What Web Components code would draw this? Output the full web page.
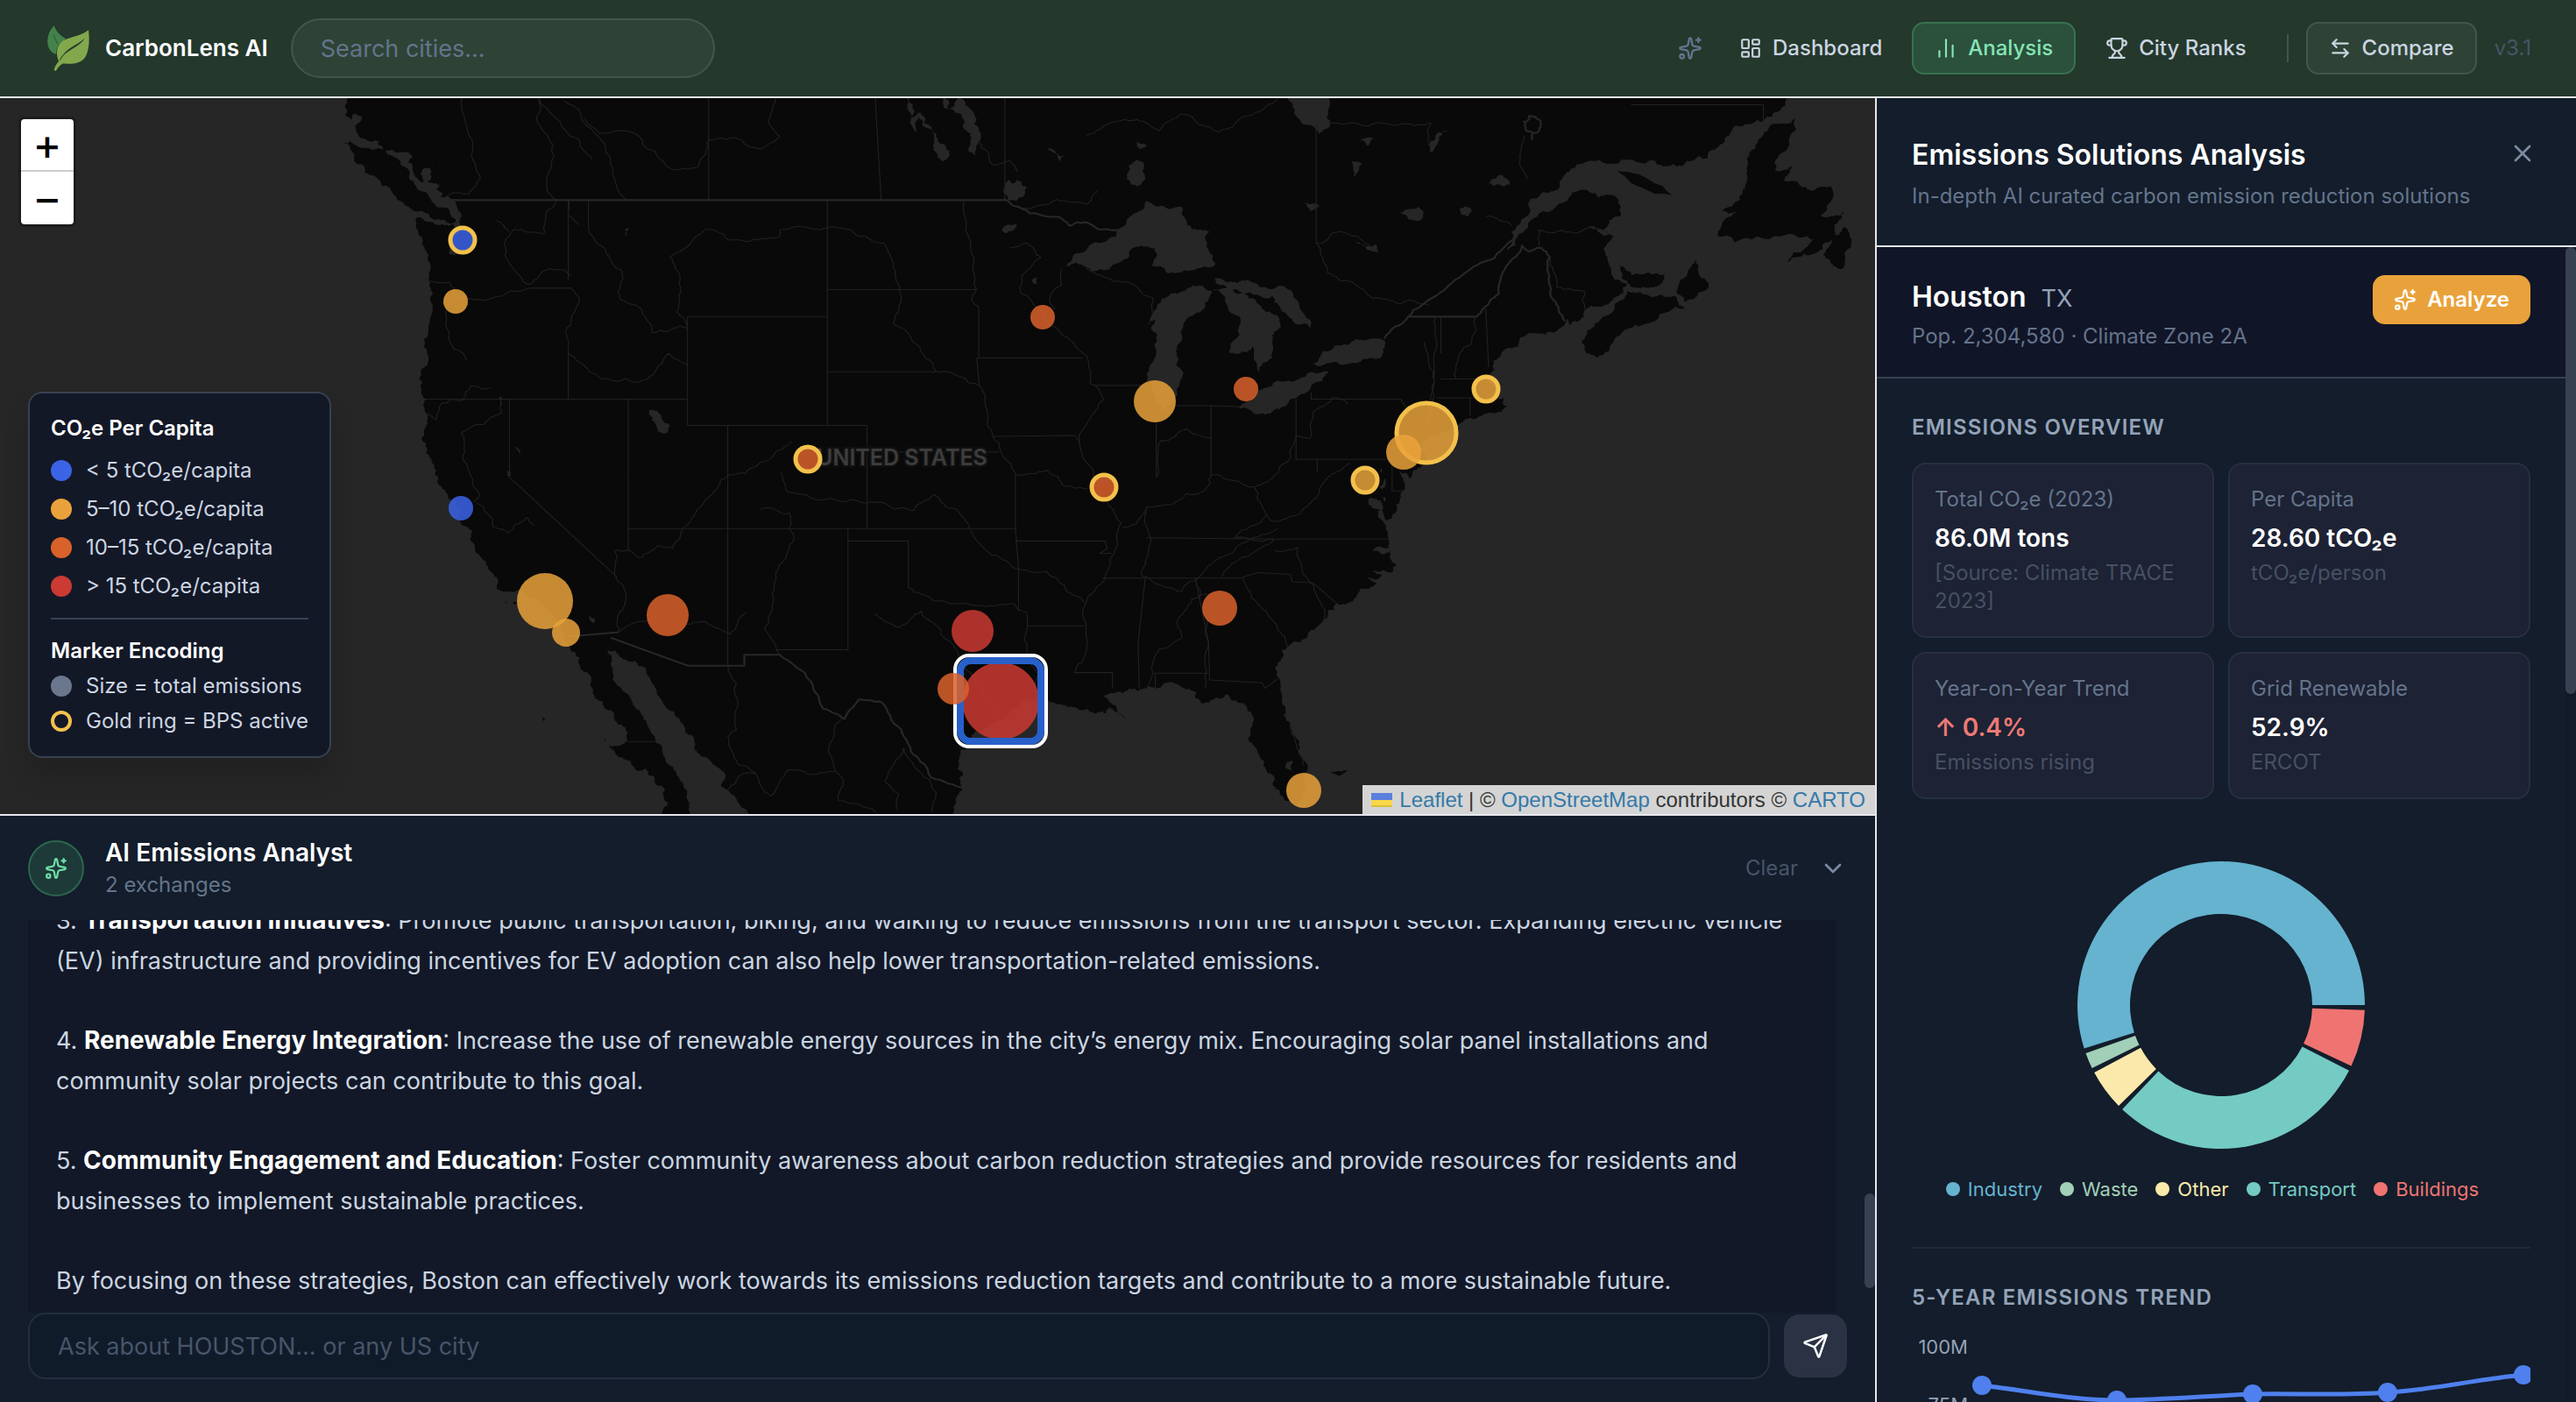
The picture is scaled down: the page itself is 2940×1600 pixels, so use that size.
<!DOCTYPE html>
<html lang="en">
<head>
<meta charset="utf-8">
<title>CarbonLens AI</title>
<style>
  html, body { margin: 0; height: 100%; }
  body {
    background: #131d2b;
    color: #cbd5e1;
    font: 400 24px/32px Inter, "Liberation Sans", sans-serif;
    -webkit-font-smoothing: antialiased;
    --line: #e5e7eb;
    --muted: #64748b;
    --dim: #475569;
    --soft: #94a3b8;
    --edge: #374151;
  }
</style>
</head>
<body>
<carbon-app></carbon-app>

<script>
const ICONS = {
  sparkles: '<path d="M11.017 2.814a1 1 0 0 1 1.966 0l1.051 5.558a2 2 0 0 0 1.594 1.594l5.558 1.051a1 1 0 0 1 0 1.966l-5.558 1.051a2 2 0 0 0-1.594 1.594l-1.051 5.558a1 1 0 0 1-1.966 0l-1.051-5.558a2 2 0 0 0-1.594-1.594l-5.558-1.051a1 1 0 0 1 0-1.966l5.558-1.051a2 2 0 0 0 1.594-1.594z"/><path d="M20 2v4"/><path d="M22 4h-4"/><circle cx="4" cy="20" r="2"/>',
  dashboard: '<rect width="7" height="9" x="3" y="3" rx="1"/><rect width="7" height="5" x="14" y="3" rx="1"/><rect width="7" height="9" x="14" y="12" rx="1"/><rect width="7" height="5" x="3" y="16" rx="1"/>',
  bars: '<path d="M5 21v-6"/><path d="M12 21V3"/><path d="M19 21V9"/>',
  trophy: '<path d="M10 14.66v1.626a2 2 0 0 1-.976 1.696A5 5 0 0 0 7 21.978"/><path d="M14 14.66v1.626a2 2 0 0 0 .976 1.696A5 5 0 0 1 17 21.978"/><path d="M18 9h1.5a1 1 0 0 0 0-5H18"/><path d="M4 22h16"/><path d="M6 9a6 6 0 0 0 12 0V3a1 1 0 0 0-1-1H7a1 1 0 0 0-1 1z"/><path d="M6 9H4.5a1 1 0 0 1 0-5H6"/>',
  swap: '<path d="M8 3 4 7l4 4"/><path d="M4 7h16"/><path d="m16 21 4-4-4-4"/><path d="M20 17H4"/>',
  close: '<path d="M18 6 6 18"/><path d="m6 6 12 12"/>',
  chevron: '<path d="m6 9 6 6 6-6"/>',
  send: '<path d="M14.536 21.686a.5.5 0 0 0 .937-.024l6.5-19a.496.496 0 0 0-.635-.635l-19 6.5a.5.5 0 0 0-.024.937l7.93 3.18a2 2 0 0 1 1.112 1.11z"/><path d="m21.854 2.147-10.94 10.939"/>'
};

class Base extends HTMLElement {
  constructor() {
    super();
    const root = this.attachShadow({ mode: 'open' });
    root.innerHTML = `<style>
      *, *::before, *::after { box-sizing: border-box; }
      :host { box-sizing: border-box; }
      button, input { font: inherit; color: inherit; margin: 0; }
      button { background: none; border: 0; padding: 0; cursor: pointer; }
      input { outline: none; min-width: 0; }
      h1, h2, h3, p, ul, dl, dd { margin: 0; padding: 0; font-size: inherit; font-weight: inherit; }
      ul { list-style: none; }
      ${this.constructor.css}</style>${this.constructor.html}`;
  }
}

/* Stroke icon, sized by --size */
class UiIcon extends HTMLElement {
  connectedCallback() {
    const root = this.shadowRoot || this.attachShadow({ mode: 'open' });
    root.innerHTML = `<style>:host{display:block;flex:none;width:var(--size,26px);height:var(--size,26px)}svg{display:block;width:100%;height:100%}</style>
      <svg viewBox="0 0 24 24" fill="none" stroke="currentColor" stroke-width="${this.getAttribute('weight') || 2}" stroke-linecap="round" stroke-linejoin="round" aria-hidden="true">${ICONS[this.getAttribute('name')]}</svg>`;
  }
}
customElements.define('ui-icon', UiIcon);

class NavButton extends Base {
  static css = `
    :host { display: block; font-weight: 500; }
    button { display: flex; align-items: center; gap: 12px; height: 60px; padding: 0 24px;
      border: 2px solid transparent; border-radius: 14px; color: #cbd5e1; }
    :host([active]) button { background: #2b503c; border-color: #38714f; color: #86e5b5; }
    :host([outlined]) button { background: #2e4336; border-color: #42574b; }`;
  static html = `<button type="button"><slot name="icon"></slot><slot></slot></button>`;
}
customElements.define('nav-button', NavButton);

class AppHeader extends Base {
  static css = `
    :host { display: flex; align-items: center; gap: 26px; height: 112px; padding: 0 51px 0 54px;
      background: #24382c; border-bottom: 2px solid var(--line); }
    .brand { display: flex; align-items: center; gap: 18px; color: #fff; font-size: 26px; font-weight: 600; }
    .brand svg { width: 48px; height: 54px; }
    input { width: 484px; height: 68px; padding: 0 32px; border-radius: 34px; font-size: 27px;
      background: #2e4336; border: 2px solid #42574b; color: #fff; }
    input::placeholder { color: var(--muted); opacity: 1; }
    nav { display: flex; align-items: center; gap: 8px; margin-left: auto; }
    .spark { color: var(--muted); padding: 8px; --size: 28px; }
    .rule { width: 2px; height: 32px; margin: 0 12px; background: #42574b; }
    .version { color: #475569; margin-left: 12px; }`;
  static html = `
    <div class="brand">
      <svg viewBox="44 28 146 162" aria-hidden="true">
        <path fill="#43824a" d="M67 30C50 50 43 70 45 92C47 112 60 126 75 130C74 105 88 88 108 76C95 68 78 58 67 30z"/>
        <path fill="none" stroke="#24382c" stroke-width="2" d="M67 62C70 78 76 88 84 98"/>
        <path fill="#82a84d" d="M187 46C192 85 188 125 172 145C152 168 118 163 98 162C86 168 80 178 74 188L67 185C70 172 77 163 84 154C72 130 76 98 100 82C130 68 162 66 187 46z"/>
        <path fill="#24382c" d="M171 78C152 98 110 106 88 150C102 118 152 106 171 78z" stroke="#24382c" stroke-width="2"/>
      </svg>
      <span>CarbonLens AI</span>
    </div>
    <input type="search" placeholder="Search cities..." aria-label="Search cities">
    <nav>
      <button class="spark" type="button" aria-label="Assistant"><ui-icon name="sparkles"></ui-icon></button>
      <nav-button><ui-icon slot="icon" name="dashboard"></ui-icon>Dashboard</nav-button>
      <nav-button active><ui-icon slot="icon" name="bars"></ui-icon>Analysis</nav-button>
      <nav-button><ui-icon slot="icon" name="trophy"></ui-icon>City Ranks</nav-button>
      <div class="rule"></div>
      <nav-button outlined><ui-icon slot="icon" name="swap"></ui-icon>Compare</nav-button>
      <span class="version">v3.1</span>
    </nav>`;
}
customElements.define('app-header', AppHeader);

class MapLegend extends Base {
  static css = `
    :host { display: block; padding: 24px 24px 22px; border: 2px solid var(--edge); border-radius: 16px;
      background: #131827; box-shadow: 0 20px 30px rgba(0,0,0,.14); }
    h3 { color: #fff; font-weight: 600; }
    ul { display: flex; flex-direction: column; gap: 8px; margin-top: 14px; }
    li { display: flex; align-items: center; gap: 16px; height: 36px; white-space: nowrap; }
    i { width: 24px; height: 24px; border-radius: 50%; background: var(--c); }
    i.ring { background: none; border: 4px solid #f3c14b; }
    hr { height: 2px; border: 0; margin: 18px 0 20px; background: var(--edge); }
    .tight { gap: 4px; margin-top: 6px; }`;
  static html = `
    <h3>CO₂e Per Capita</h3>
    <ul>
      <li><i style="--c:#3b63e6"></i>&lt; 5 tCO₂e/capita</li>
      <li><i style="--c:#e9a23b"></i>5–10 tCO₂e/capita</li>
      <li><i style="--c:#d9622b"></i>10–15 tCO₂e/capita</li>
      <li><i style="--c:#cb3a33"></i>&gt; 15 tCO₂e/capita</li>
    </ul>
    <hr>
    <h3>Marker Encoding</h3>
    <ul class="tight">
      <li><i style="--c:#6b778c"></i>Size = total emissions</li>
      <li><i class="ring"></i>Gold ring = BPS active</li>
    </ul>`;
}
customElements.define('map-legend', MapLegend);

/* ---- base map geometry: west half coordinates; the east half is shifted by EAST ---- */
const EAST = 1498;
const parse = s => s.trim().split(/\s+/).map(p => p.split(',').map(Number));
const east = s => parse(s).map(([x, y]) => [x + EAST, y]);
let seed = 7;
const rnd = () => (seed = (seed * 16807) % 2147483647) / 2147483647 - 0.5;
/* adds small-scale jaggedness to a line by midpoint displacement */
function rough(pts, amp, closed) {
  let out = closed ? [...pts, pts[0]] : pts;
  for (let k = 0; k < 3; k++) {
    const next = [out[0]];
    for (let i = 1; i < out.length; i++) {
      const [ax, ay] = out[i - 1], [bx, by] = out[i];
      const len = Math.hypot(bx - ax, by - ay);
      if (len > 5 && len < 160) {
        const d = rnd() * amp * Math.min(len, 40);
        next.push([(ax + bx) / 2 - (by - ay) / len * d, (ay + by) / 2 + (bx - ax) / len * d]);
      }
      next.push([bx, by]);
    }
    out = next;
  }
  return 'M' + out.map(p => p[0].toFixed(1) + ' ' + p[1].toFixed(1)).join('L') + (closed ? 'Z' : '');
}

const westCoast = parse(`20,-10 24,20 38,55 42,38 50,42 82,40 60,44 48,60 46,78 60,92 78,100 95,92 90,106 112,118 128,122 150,122 158,130 150,145
  160,165 180,188 178,160 198,145 196,165 188,185 207,190 218,192 205,203 220,210 214,220 230,215 240,225 248,245 256,262 258,290 245,300 240,278 222,282
  200,276 180,268 165,265 168,290 178,312 184,335 188,355 195,378 190,400 194,406 193,440 190,500 187,560 175,595 172,615 176,640 186,662 182,680
  188,700 182,725 178,750 186,778 197,798 203,820 212,848 224,862 235,880 246,882 252,905 252,925 265,938 278,948 275,970 290,998 305,1020 318,1040
  327,1050 326,1074 355,1079 378,1080 395,1095 420,1115 440,1140 460,1170 468,1195 482,1212 490,1238 508,1258 512,1280 520,1312 545,1337 560,1345
  575,1370 586,1385 584,1405 572,1415 548,1415 575,1440 600,1465 622,1465 640,1485 660,1510 666,1540 660,1580`);
const gulfCal = parse(`722,1580 708,1545 702,1510 690,1490 680,1470 660,1440 655,1420 640,1395 625,1370 612,1345 600,1330 590,1310 573,1290 556,1270
  553,1240 545,1205 560,1208 576,1226 600,1230 622,1245 635,1280 650,1310 665,1335 680,1350 700,1385 720,1410 735,1440 755,1455 780,1485
  772,1505 790,1520 810,1545 828,1580`);
const gulfMex = parse(`1234,1580 1236,1545 1245,1520 1256,1510 1252,1480 1243,1450 1247,1430 1262,1408 1285,1385 1320,1362 1350,1335 1390,1318 1420,1312
  1450,1326 1475,1330 1500,1335 1516,1346 1536,1345`).concat(east(`45,1330 60,1342 78,1355 60,1330 45,1320 32,1306 48,1300 64,1298 85,1290 120,1290
  150,1285 190,1288 218,1298 228,1322 250,1315 280,1303 305,1322 333,1360 330,1410 345,1440 360,1475 375,1505 395,1535 415,1543 430,1530 436,1500
  435,1450 425,1420 406,1370 390,1325 380,1265 388,1225 405,1195 440,1175 465,1150 480,1122 500,1105 520,1105 545,1072 578,1062 560,1050 588,1045
  570,1035 610,1035 616,1020 605,990 570,992 602,984 600,960 596,940 585,900 560,880 590,888 582,850 586,810 592,830 596,880 598,925 615,890 634,855
  622,818 642,832 658,812 678,790 665,762 682,742 705,735 740,712 762,700 792,692 812,690 836,676 830,658 815,655 808,650 800,620 812,598 825,560
  860,545 880,515 912,520 950,500 955,485 962,498 990,468 1020,458 1048,440 1075,408 1052,400 1040,370 1036,320 1048,305 1015,290 1000,284 1030,290
  1060,262 1062,240 1040,215 1000,208 960,220 900,255 860,300 832,340 845,295 880,240 905,210 940,200 955,165 975,148 1020,138 1080,138 1130,140
  1165,148 1200,142 1235,135 1260,105 1285,70 1320,60 1346,55 1380,30 1410,-10`));

const ISLANDS = [
  parse('22,102 35,98 70,112 122,132 150,160 165,195 195,225 232,250 244,268 235,278 200,268 150,240 122,215 98,195 75,172 60,150 42,140 38,120'),
  east('1050,455 1075,425 1110,432 1140,432 1175,440 1190,462 1130,490 1080,505 1050,530 1015,570 995,560 985,535 995,510 1020,490'),
  east('1175,430 1180,400 1212,355 1217,385 1237,412 1215,432 1190,448'),
  east('1060,368 1085,390 1150,388 1130,415 1100,418 1070,400'),
  east('1310,195 1315,150 1335,100 1365,60 1410,48 1398,90 1370,140 1365,165 1402,152 1388,185 1420,195 1440,205 1480,195 1485,220 1460,260 1507,250 1488,280 1480,312 1505,285 1522,312 1505,375 1485,370 1465,345 1482,312 1440,345 1395,362 1430,330 1450,312 1380,305 1290,318 1258,305 1262,285 1300,255 1265,250 1300,225'),
  east('700,722 745,711 722,724 690,733'),
  parse('575,1440 560,1425 552,1418 570,1428'),
  parse('340,1100 352,1103 346,1106'), parse('358,1102 366,1104 362,1107'),
  parse('415,1350 421,1356 418,1362'), parse('537,1392 543,1402 539,1408'),
  east('485,1472 520,1469 492,1477')
];
const SMOOTH_ISLAND = east('1055,163 1100,170 1145,195 1163,215 1130,212 1085,190');
const LAKES = [
  east('-40,370 0,335 70,285 105,250 120,228 140,240 190,240 210,290 245,295 240,330 257,365 240,372 200,380 160,385 130,368 135,330 110,325 75,355 40,378 20,380 0,372'),
  east('225,412 250,425 235,450 205,480 190,520 180,560 191,610 178,655 150,685 132,645 125,590 135,540 130,500 150,460 122,500 150,440 180,430'),
  east('250,420 300,430 345,455 372,475 387,500 370,530 370,570 343,602 330,545 305,560 285,560 285,540 305,520 305,480 275,445'),
  east('255,395 290,405 330,405 400,420 430,470 448,508 415,495 385,458 370,435 310,430 280,418'),
  east('302,678 325,665 345,640 375,622 420,618 482,600 470,620 420,655 385,682 345,692'),
  east('448,582 470,555 520,542 592,532 585,570 540,580 500,580'),
  east('375,-10 415,30 430,60 462,82 485,60 480,30 500,-10'),
  east('85,150 100,138 115,150 118,180 100,196 80,180'),
  east('742,246 753,240 766,248 758,262 748,258'),
  parse('1138,-5 1150,45 1168,35 1175,60 1190,70 1202,95 1220,115 1224,132 1212,143 1202,132 1196,100 1185,70 1165,45 1160,78 1148,60'),
  parse('1208,-5 1225,30 1245,-5 1256,10 1275,38 1288,80 1278,128 1264,120 1268,80 1250,40 1232,28 1215,25'),
  parse('628,683 648,690 658,710 670,718 655,735 640,712'),
  parse('1336,195 1345,182 1352,190 1360,180 1370,195 1380,200 1375,215 1360,230 1342,225 1334,212'),
  parse('1330,293 1340,280 1360,280 1352,292 1336,298'), parse('1390,398 1400,394 1398,410'),
  parse('580,290 588,286 584,306'), parse('507,1130 520,1138 520,1147 512,1143'),
  parse('330,655 336,655 334,675'), parse('346,818 353,818 352,832'), parse('362,764 374,772 370,780'),
  east('398,1450 412,1450 408,1470 398,1465'),
  parse('230,325 245,330 244,345 232,344'), parse('1420,115 1445,130 1465,125 1445,142'),
  east('100,98 120,108 108,115'), east('430,232 465,240 445,250'), east('620,255 660,240 670,262 640,268'), east('535,318 575,322 582,338 556,330'),
  east('800,190 820,172 842,192 820,192'), east('680,105 700,78 728,66 700,100 685,122'), east('545,95 570,92 560,108'), east('528,140 548,148 532,175')
];
const RIVERS = [
  parse('670,350 740,290 780,308 830,315 885,308 890,290 940,285 1000,285 1050,305 1095,320 1118,380 1130,440 1115,495 1160,540 1200,600 1250,612 1285,630 1300,690 1312,740 1330,780 1357,825 1420,815 1455,850 1500,855'),
  parse('468,560 510,600 560,620 610,622 640,600 668,560 705,585'), parse('670,350 690,400 683,470 705,505'),
  parse('912,752 880,775 820,822 785,825 740,880 700,938 675,985 645,980 615,1005 590,990 560,990 563,1048 583,1085 568,1130 568,1168'),
  parse('890,820 905,862 1000,880 1080,885 1155,903 1195,868 1240,900 1265,940 1310,1000 1363,1030 1420,1035 1460,1080 1495,1105'),
  parse('850,900 908,908 915,970 880,1040 868,1130 858,1160 888,1217'),
  parse('280,884 292,870 265,800 255,735 300,715 335,690 335,660'), parse('285,885 320,940 348,952 385,918 400,936'),
  parse('258,0 262,50 278,110 293,180 270,213 230,215'), parse('410,5 405,50 438,105 432,160 425,195 445,226'),
  parse('410,5 455,65 490,95 515,138'), parse('460,10 520,80 550,130 565,200 588,226'),
  parse('500,50 530,80 600,80 640,120 685,160 725,155 747,95 800,90 850,115 888,90 865,55 880,5'),
  parse('468,226 468,260 490,280'), parse('445,226 425,250 420,298 360,290 340,320 355,370 390,410 430,375 474,390'),
  parse('325,270 350,295'), parse('194,402 232,405 245,437 320,438 390,418'), parse('240,440 225,490 240,550 266,575'),
  parse('188,690 205,705 215,670 260,660 275,630 315,636'),
  parse('508,290 550,350 575,382 570,440 610,460 635,515 690,500 705,508'), parse('474,418 490,440 462,515 468,560'),
  parse('1255,226 1268,330 1280,421 1270,445 1284,460'), parse('1345,330 1380,320 1408,352 1370,400 1370,430 1400,460 1440,505 1491,560 1505,625 1533,660 1500,710 1485,760 1512,830 1540,885 1568,930 1560,970 1545,1010 1518,1070 1495,1110 1500,1190 1475,1256'),
  parse('1449,375 1449,410 1425,440 1435,465'),
  parse('1144,1070 1170,1085 1200,1100 1280,1110 1350,1105 1380,1125'), parse('1078,1127 1125,1158 1170,1122 1215,1180 1250,1230 1290,1300 1320,1350'),
  parse('568,1168 640,1135 700,1152 740,1145 790,1172 822,1125'), parse('1380,1125 1380,1205 1402,1260 1400,1330'),
  parse('1285,100 1310,148 1345,140 1360,165'), parse('1370,245 1440,225 1500,235 1520,205'),
  east('417,740 405,790 370,832 335,852 310,845 280,835 248,825 230,862 200,865 160,890 120,895 100,932 72,938'),
  east('525,800 490,822 460,870 425,910 370,926 340,880 335,852'),
  east('139,830 148,750 200,725 250,745'), east('417,740 445,745 450,690 490,655 520,670'),
  east('110,1045 125,980 120,895'), east('110,1045 190,1080 230,1040 265,1005 320,970 380,942'),
  east('268,1048 300,1012 345,985 372,965 295,962 360,912'), east('310,1048 340,1105 380,1160 400,1200'), east('375,990 420,983 440,1050 475,1120 470,1145'),
  east('120,1288 145,1205 190,1180 180,1150 210,1095 240,1085'), east('217,1050 232,1120 243,1190 236,1290'),
  east('695,480 692,560 690,660 682,720'), east('775,480 765,540 742,560 735,615'), east('672,535 690,600 685,690'),
  east('457,320 480,385 530,405 570,440 620,452 650,445 680,455'), east('457,320 490,298 540,305 580,340'),
  east('0,375 40,395 100,415 132,440 130,470'), east('0,85 55,55 100,50 145,75 190,38 262,78 330,40 382,5'),
  east('480,60 560,65 640,60 685,58 680,100'), east('870,85 862,130 878,180'), east('795,262 845,282'), east('900,325 900,292 960,295 1000,285 1035,300'),
  east('922,350 935,415 990,425 990,465'), east('405,1370 415,1400 433,1460'),
  parse('785,1241 802,1280 802,1380 785,1395 805,1455 840,1475 870,1525 905,1468 960,1478 1000,1470 1015,1500 1005,1535 1080,1560'),
  parse('1010,1358 988,1410 1000,1470'), parse('840,1475 810,1480 785,1510'), parse('1135,1420 1118,1450 1098,1490 1125,1520 1120,1555'), parse('1135,1420 1165,1470 1200,1520 1190,1560')
];
const BOLD = [
  parse('1334,224 1370,245 1440,262 1465,282 1500,275 1540,290 1568,290'),
  parse('888,1217 950,1275 975,1335 1017,1357 1045,1315 1090,1320 1130,1380 1162,1440 1190,1485 1256,1510'),
  east('775,480 790,462 820,430 835,370 866,325 880,338 905,330 921,350 922,430 940,470 952,490'),
  east('592,528 640,480 695,435 760,380 812,352 855,295')
];
const STATES = `M747 0V226M1078 0L1090 226M1336 0V226M468 226V400M508 226V290M390 418H474M468 560V660M185 660H705M705 480H983M705 480V717M705 717H1062
  M983 226V717M983 421H1280M983 600H1200M1062 717V942M1062 775H1325M785 717V1241M587 660V990M351 660V830L565 1048M587 942H1357M1024 942V1206H880
  M1024 969H1144V1070M1357 825V942L1363 1025V1120M1357 969H1535L1540 985L1525 996H1548M1284 460V570M1280 570H1491M1280 570L1285 630M1312 741L1475 739L1485 755
  M1380 1154H1495M1475 1256H1550V1290M1530 1050H1808M1515 630H1618M1637 700V830M1746 674V825M1676 674H1746L1803 676M1915 660V740M1945 645V660H2123L2135 680V700
  M1915 740V791H2098M1957 791V820M2106 800V860H2132M1618 962L1878 965H2098M1808 1048L1840 1038L1903 1042L1908 1058L1948 1060L1998 1107M1615 1050L1601 1190L1603 1290
  M1715 1050L1741 1190L1743 1272L1848 1278L1853 1290L1878 1270M1635 1257H1740M1635 1257V1290M2203 480V560M2292 462L2298 590M2203 616H2298M2195 657H2290M2261 657V695
  M1955 60V320M2581 18H2844V55M580 1406H640`;

const MARKS = [
  // x, y, radius, colour, gold ring
  [528, 274, 14, '#3b63e6', 1], [520, 344, 14, '#e9a23b'], [526, 580, 14, '#3b63e6'], [622, 686, 32, '#e9a23b'], [646, 722, 16, '#e9a23b'],
  [762, 702, 24, '#d9622b'], [922, 524, 14, '#d9622b', 1], [1190, 362, 14, '#d9622b'], [1260, 556, 14, '#d9622b', 1], [1110, 720, 24, '#cb3a33'],
  [1142, 800, 44, '#cb3a33', 2], [1088, 786, 18, '#d9622b'], [1318, 458, 24, '#e9a23b'], [1422, 444, 14, '#d9622b'], [1696, 444, 14, '#e9a23b', 1],
  [1628, 494, 34, '#e9a23b', 1], [1602, 516, 20, '#e9a23b'], [1558, 548, 14, '#e9a23b', 1], [1392, 694, 20, '#d9622b'], [1488, 902, 20, '#e9a23b']
];

class EmissionsMap extends Base {
  static css = `
    :host { display: block; position: relative; overflow: hidden; background: #262626; }
    svg.tiles { display: block; width: 100%; height: 100%; }
    svg text { font: 600 25px Inter, sans-serif; fill: #3d3d3d; stroke: #111; stroke-width: 4px; paint-order: stroke; }
    .zoom { position: absolute; left: 24px; top: 24px; display: flex; flex-direction: column; width: 60px;
      border-radius: 4px; overflow: hidden; box-shadow: 0 0 0 3px rgba(0,0,0,.25); }
    .zoom button { height: 60px; padding-top: 4px; background: #fff; color: #000; font: 700 38px/52px "DejaVu Sans", sans-serif; }
    .zoom button:first-child { border-bottom: 2px solid #ccc; }
    map-legend { position: absolute; left: 32px; bottom: 64px; }
    .credit { position: absolute; right: 0; bottom: 0; display: flex; align-items: center; height: 33px; padding: 0 11px 0 10px;
      background: #d4d4d4; color: #333; font: 24px/33px "Liberation Sans", Arial, sans-serif; white-space: pre; }
    .credit a { color: #3579a8; text-decoration: none; }
    .credit svg { width: 24px; height: 16px; margin-right: 8px; }`;
  static html = `
    <svg class="tiles" viewBox="0 0 2140 817" preserveAspectRatio="xMidYMid slice" role="img" aria-label="Map of city emissions"></svg>
    <div class="zoom"><button type="button" aria-label="Zoom in">+</button><button type="button" aria-label="Zoom out">−</button></div>
    <map-legend></map-legend>
    <div class="credit"><svg viewBox="0 0 12 8" aria-hidden="true"><path fill="#5b7fdc" d="M0 0h12v4H0z"/><path fill="#f8d84a" d="M0 4h12v3H0z"/><path fill="#dcbd3c" d="M0 7h12v1H0z"/></svg><a href="#">Leaflet</a> | © <a href="#">OpenStreetMap</a> contributors © <a href="#">CARTO</a></div>`;
  connectedCallback() {
    const land = '#090909', water = '#262626';
    const coast = rough(westCoast, .5) + 'L' + rough(gulfCal, .4).slice(1) + 'L' + rough(gulfMex, .5).slice(1) + 'Z';
    let s = `<g transform="translate(380 -2) scale(.574 .5236)" stroke-linejoin="round">
      <path fill="${land}" d="${coast}"/><path fill="${land}" d="${ISLANDS.map(p => rough(p, .45, true)).join('')}${rough(SMOOTH_ISLAND, .1, true)}"/>
      <path fill="${water}" d="${LAKES.map(p => rough(p, .45, true)).join('')}"/>
      <path fill="none" stroke="${water}" stroke-width="4" d="${rough(east('870,55 880,43 893,44 904,58 901,74 889,81 875,76'), .6, true)}M${EAST + 886} 81V96"/>
      <g fill="none" stroke="#212121" stroke-width="2"><path d="${STATES}"/><path d="${RIVERS.map(p => rough(p, .3)).join('')}"/></g>
      <g fill="none" stroke="#272727" stroke-width="4"><path d="M230 226H1336M463 1178L568 1168M552 1180L706 1241H818V1217H888M2138 480H2273"/><path d="${BOLD.map(p => rough(p, .25)).join('')}"/></g>
    </g><text x="932" y="419">UNITED STATES</text>`;
    for (const [x, py, r, c, ring] of MARKS) {
      const y = py - 112;
      if (ring === 2) s += `<circle cx="${x}" cy="${y}" r="${r}" fill="${c}" fill-opacity=".85"/>
        <rect x="${x - 46}" y="${y - 46}" width="92" height="92" rx="12" fill="none" stroke="#2860ca" stroke-width="8"/>
        <rect x="${x - 52}" y="${y - 52}" width="104" height="104" rx="16" fill="none" stroke="#fff" stroke-width="4"/>`;
      else s += `<circle cx="${x}" cy="${y}" r="${r}" fill="${c}" fill-opacity=".85" ${ring ? 'stroke="#f3c14b" stroke-width="5"' : ''}/>`;
    }
    this.shadowRoot.querySelector('.tiles').innerHTML = s;
  }
}
customElements.define('emissions-map', EmissionsMap);

class ChatPanel extends Base {
  static css = `
    :host { display: flex; flex-direction: column; border-top: 2px solid var(--line); background: #131d2b; }
    header { display: flex; align-items: center; gap: 24px; flex: none; height: 119px; padding: 0 32px; }
    .badge { display: flex; align-items: center; justify-content: center; width: 64px; height: 64px; border-radius: 50%;
      background: #1d3a38; border: 2px solid #2e654f; color: #6fdfa8; }
    h2 { color: #fff; font-size: 28px; font-weight: 600; line-height: 38px; }
    header p { color: var(--muted); line-height: 36px; }
    .tools { display: flex; align-items: center; gap: 24px; margin-left: auto; color: var(--dim); }
    .tools ui-icon { --size: 32px; color: #7c8ba1; }
    .scroll { flex: 1; min-height: 0; display: flex; overflow: hidden; padding-left: 32px; }
    .message { flex: 1; display: flex; flex-direction: column; justify-content: flex-end; gap: 45px; padding: 0 32px 13px;
      background: #121827; font-size: 27px; line-height: 46px; min-height: 0; overflow: hidden; }
    .message p { flex: none; }
    strong { color: #fff; font-size: 28px; font-weight: 700; line-height: 1; }
    .gutter { width: 44px; padding-left: 32px; display: flex; flex-direction: column; justify-content: flex-end; }
    .thumb { height: 108px; margin-bottom: 28px; border-radius: 6px; background: #374151; }
    form { display: flex; align-items: center; gap: 16px; padding: 0 32px 26px; }
    input { flex: 1; height: 76px; padding: 0 32px; border-radius: 20px; background: #101b29; border: 2px solid #212f3f; font-size: 27px; }
    input::placeholder { color: var(--dim); opacity: 1; }
    form button { display: flex; align-items: center; justify-content: center; width: 72px; height: 72px; border-radius: 18px;
      background: #2a3243; color: #fff; --size: 30px; }`;
  static html = `
    <header>
      <div class="badge"><ui-icon name="sparkles"></ui-icon></div>
      <div><h2>AI Emissions Analyst</h2><p>2 exchanges</p></div>
      <div class="tools"><button type="button">Clear</button><button type="button" aria-label="Collapse"><ui-icon name="chevron"></ui-icon></button></div>
    </header>
    <div class="scroll">
      <div class="message">
        <p>3. <strong>Transportation Initiatives</strong>: Promote public transportation, biking, and walking to reduce emissions from the transport sector. Expanding electric vehicle (EV) infrastructure and providing incentives for EV adoption can also help lower transportation-related emissions.</p>
        <p>4. <strong>Renewable Energy Integration</strong>: Increase the use of renewable energy sources in the city’s energy mix. Encouraging solar panel installations and community solar projects can contribute to this goal.</p>
        <p>5. <strong>Community Engagement and Education</strong>: Foster community awareness about carbon reduction strategies and provide resources for residents and businesses to implement sustainable practices.</p>
        <p>By focusing on these strategies, Boston can effectively work towards its emissions reduction targets and contribute to a more sustainable future.</p>
      </div>
      <div class="gutter"><div class="thumb"></div></div>
    </div>
    <form onsubmit="return false">
      <input type="text" placeholder="Ask about HOUSTON... or any US city" aria-label="Ask the analyst">
      <button type="submit" aria-label="Send"><ui-icon name="send"></ui-icon></button>
    </form>`;
}
customElements.define('chat-panel', ChatPanel);

class StatCard extends Base {
  static css = `
    :host { display: block; padding: 24px; border: 2px solid #272f41; border-radius: 16px; background: #1d2234; }
    .label { color: var(--muted); }
    .value { margin: 8px 0 4px; color: #fff; font-size: 28px; font-weight: 600; line-height: 40px; }
    :host([alert]) .value { color: #ee7a75; }
    .note { color: #475063; }`;
  static html = `<div class="label"><slot name="label"></slot></div><div class="value"><slot></slot></div><div class="note"><slot name="note"></slot></div>`;
}
customElements.define('stat-card', StatCard);

class DonutChart extends Base {
  static css = `
    :host { display: flex; flex-direction: column; align-items: center; }
    svg { display: block; width: 328px; height: 328px; }
    ul { display: flex; justify-content: center; margin-top: 30px; font-size: 22px; }
    li { display: flex; align-items: center; gap: 9px; margin-right: 20px; color: var(--c); }
    li i { width: 16px; height: 16px; border-radius: 50%; background: currentColor; }`;
  static html = `<svg viewBox="-164 -164 328 328" role="img" aria-label="Emissions by sector"></svg><ul></ul>`;
  connectedCallback() {
    const data = [['Industry', '#65b3cf', 0, 197.6], ['Waste', '#a2cfb8', 199.6, 206], ['Other', '#fbe9ab', 208, 224.5],
      ['Transport', '#74cbc3', 226.5, 332.9], ['Buildings', '#ef7471', 334.9, 358]];
    const pt = (r, a) => (r * Math.cos(a * Math.PI / 180)).toFixed(2) + ' ' + (-r * Math.sin(a * Math.PI / 180)).toFixed(2);
    this.shadowRoot.querySelector('svg').innerHTML = data.map(([, c, a, b]) => {
      const big = b - a > 180 ? 1 : 0;
      return `<path fill="${c}" d="M${pt(164, a)}A164 164 0 ${big} 0 ${pt(164, b)}L${pt(104, b)}A104 104 0 ${big} 1 ${pt(104, a)}Z"/>`;
    }).join('');
    this.shadowRoot.querySelector('ul').innerHTML = data.map(([n, c]) => `<li style="--c:${c}"><i></i>${n}</li>`).join('');
  }
}
customElements.define('donut-chart', DonutChart);

class TrendChart extends Base {
  static css = `
    :host { display: flex; height: 320px; }
    .axis { display: flex; flex-direction: column; gap: 34px; width: 64px; text-align: right; color: var(--soft); font-size: 22px; }
    svg { display: block; flex: 1; min-width: 0; height: 320px; overflow: hidden; }`;
  static html = `
    <div class="axis"><span>100M</span><span>75M</span></div>
    <svg viewBox="0 0 642 320" preserveAspectRatio="none" role="img" aria-label="Five-year emissions trend">
      <path fill="none" stroke="#4f80ee" stroke-width="5" d="M16 60C67 66 119 77 170 77C221 77 273 72 325 70C376 69 428 72 479 68C530 65 582 53 634 48"/>
      <g fill="#4f80ee"><circle cx="16" cy="60" r="11"/><circle cx="170" cy="77" r="11"/><circle cx="325" cy="70" r="11"/><circle cx="479" cy="68" r="11"/><circle cx="634" cy="48" r="11"/></g>
    </svg>`;
}
customElements.define('trend-chart', TrendChart);

class AnalysisPanel extends Base {
  static css = `
    :host { display: flex; flex-direction: column; min-height: 0; border-left: 2px solid var(--line); background: #131d2b; }
    .top { display: flex; flex: none; height: 170px; padding: 45px 40px 0; border-bottom: 2px solid var(--line); }
    .top > div { flex: 1; }
    .top h1 { color: #fff; font-size: 32px; font-weight: 600; line-height: 40px; }
    .top p { margin-top: 11px; color: var(--muted); }
    .top button { align-self: flex-start; margin-top: 2px; margin-right: 5px; color: #7c8ba1; --size: 32px; }
    .body { flex: 1; min-height: 0; display: flex; overflow: hidden; }
    .content { flex: 1; min-width: 0; }
    .bar { flex: none; width: 12px; background: #111a28; }
    .bar div { height: 510px; border-radius: 6px; background: #374151; }
    .city { display: flex; align-items: flex-start; height: 150px; padding: 32px 40px 0; background: #111528; border-bottom: 2px solid #364152; }
    .city > div { flex: 1; }
    .name { display: flex; align-items: baseline; gap: 17px; line-height: 50px; font-size: 27px; color: var(--soft); }
    .name h2 { color: #fff; font-size: 32px; font-weight: 600; }
    .city p { margin-top: 2px; color: var(--muted); }
    .city button { display: flex; align-items: center; gap: 12px; height: 56px; padding: 0 24px; border-radius: 14px;
      background: #e9a23b; color: #fff; font-weight: 600; }
    section { margin: 0 40px; padding-top: 40px; }
    section + section { border-top: 2px solid #1f2937; }
    h3 { color: var(--soft); font-weight: 600; letter-spacing: .05em; }
    .grid { display: grid; grid-template-columns: 1fr 1fr; gap: 16px; margin-top: 24px; }
    donut-chart { margin: 71px 0 50px; }
    trend-chart { margin-top: 24px; }`;
  static html = `
    <div class="top">
      <div><h1>Emissions Solutions Analysis</h1><p>In-depth AI curated carbon emission reduction solutions</p></div>
      <button type="button" aria-label="Close"><ui-icon name="close"></ui-icon></button>
    </div>
    <div class="body">
      <div class="content">
        <div class="city">
          <div><div class="name"><h2>Houston</h2><span>TX</span></div><p>Pop. 2,304,580 · Climate Zone 2A</p></div>
          <button type="button"><ui-icon name="sparkles"></ui-icon>Analyze</button>
        </div>
        <section>
          <h3>EMISSIONS OVERVIEW</h3>
          <div class="grid">
            <stat-card><span slot="label">Total CO₂e (2023)</span>86.0M tons<span slot="note">[Source: Climate TRACE 2023]</span></stat-card>
            <stat-card><span slot="label">Per Capita</span>28.60 tCO₂e<span slot="note">tCO₂e/person</span></stat-card>
            <stat-card alert><span slot="label">Year-on-Year Trend</span>↑ 0.4%<span slot="note">Emissions rising</span></stat-card>
            <stat-card><span slot="label">Grid Renewable</span>52.9%<span slot="note">ERCOT</span></stat-card>
          </div>
          <donut-chart></donut-chart>
        </section>
        <section>
          <h3>5-YEAR EMISSIONS TREND</h3>
          <trend-chart></trend-chart>
        </section>
      </div>
      <div class="bar"><div></div></div>
    </div>`;
}
customElements.define('analysis-panel', AnalysisPanel);

class CarbonApp extends Base {
  static css = `
    :host { display: flex; flex-direction: column; height: 100vh; overflow: hidden; }
    app-header { flex: none; }
    main { flex: 1; min-height: 0; display: grid; grid-template-columns: minmax(0, 1fr) 800px; }
    .left { display: grid; grid-template-rows: minmax(0, 817fr) minmax(0, 671fr); min-height: 0; }`;
  static html = `
    <app-header></app-header>
    <main>
      <div class="left"><emissions-map></emissions-map><chat-panel></chat-panel></div>
      <analysis-panel></analysis-panel>
    </main>`;
}
customElements.define('carbon-app', CarbonApp);
</script>
</body>
</html>
